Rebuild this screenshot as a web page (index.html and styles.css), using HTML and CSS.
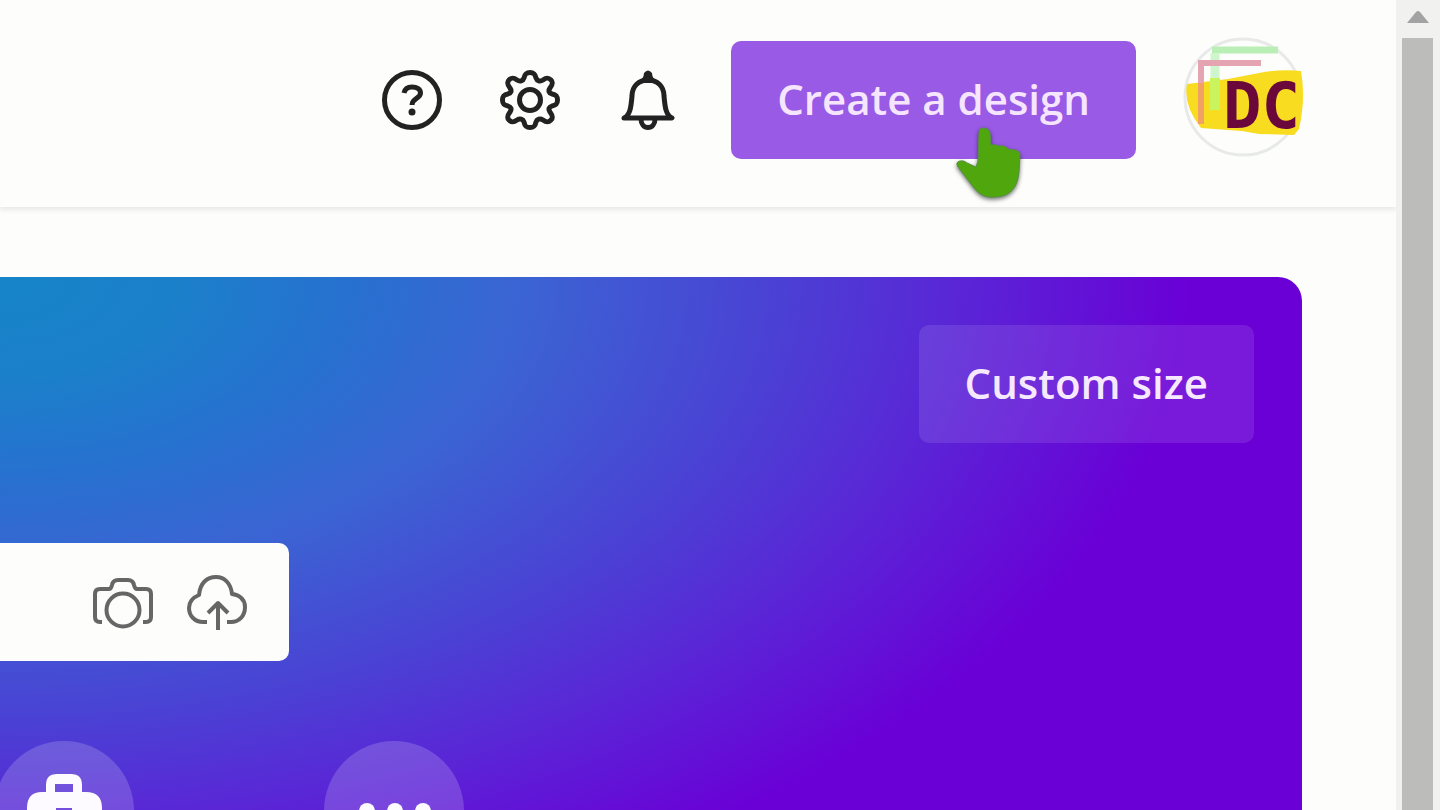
FILE: index.html
```html
<!DOCTYPE html>
<html lang="en">
<head>
<meta charset="utf-8">
<title>Home</title>
<link rel="stylesheet" href="styles.css">
</head>
<body>
<div class="page">
  <header class="header">
    <nav class="tools" aria-label="Account tools">
      <button class="icon-button" aria-label="Help">
        <svg class="icon" viewBox="0 0 60 60"><circle cx="30" cy="30" r="27.500"/><path d="M22 23c1-5 4-6 8-6 5 0 8.500 2 8.500 6 0 6-8.500 5-8.500 12"/><circle class="dot" cx="30" cy="42" r="3.500"/></svg>
      </button>
      <button class="icon-button" aria-label="Settings">
        <svg class="icon" viewBox="0 0 60 60"><circle cx="30" cy="30" r="10.500"/><path d="M24 8C25 3 27 2.500 30 2.500S35 3 36 8C37 11 40 12 43 10C47 7 49 8 51 10S53 14 50 18C48 21 49 23 52 24C57 25 57.500 27 57.500 30S57 35 52 36C49 37 48 39 50 42C53 46 53 48 51 50S47 53 43 50C40 48 37 49 36 52C35 57 33 57.500 30 57.500S25 57 24 52C23 49 20 48 17 50C13 53 11 52 9 50S7 46 10 42C12 39 11 37 8 36C3 35 2.500 33 2.500 30S3 25 8 24C11 23 12 21 10 18C7 14 7 12 9 10S13 7 17 10C20 12 23 11 24 8Z"/></svg>
      </button>
      <button class="icon-button" aria-label="Notifications">
        <svg class="icon" viewBox="0 0 60 60"><path d="M6 48C12 45 13 38 14 26C14 16 21 10 30 10S46 16 46 26C47 38 48 45 54 48Z"/><path class="dot" d="M20 13Q26 8 26 3 30-2 34 3 34 8 40 13Z"/><path d="M23 49c0 5 3 8.500 7 8.500s7-3.500 7-8.500"/></svg>
      </button>
    </nav>
    <div class="create">
      <button class="button button-create">Create a design</button>
      <svg class="pointer" viewBox="0 0 70 76"><path d="M25 5Q25 1 29 1Q35 1 36 6L37 18Q41 17 45 19Q51 18 54 22L61 23Q66 24 66 28L65 45Q63 69 42 70Q28 72 20 61L4 40Q1 35 6 34Q10 33 13 36L22 40L24 34Z"/></svg>
    </div>
    <button class="avatar-button" aria-label="Account DC">
      <svg class="avatar" viewBox="0 3 120 118">
        <circle class="avatar-ring" cx="59" cy="59" r="58"/>
        <path fill="#f8dc20" d="M3 46L44 41 75 35Q96 31 117 33Q122 60 115 91L110 97 75 96 58 93 17 90Q-1 67 3 46Z"/>
        <path fill="none" stroke="#c9f45d" stroke-width="10" d="M31 40V72"/>
        <path fill="none" stroke="#b9efb5" stroke-width="7" d="M28 12H94"/>
        <path fill="none" stroke="#cff5cc" stroke-width="9" d="M31 15V40"/>
        <path fill="none" stroke="#f2a064" stroke-width="6" d="M17 44V86"/>
        <path fill="none" stroke="#e5a4b1" stroke-width="6" d="M17 45V25H77"/>
        <text class="monogram" x="39" y="90">DC</text>
      </svg>
    </button>
  </header>
  <main class="content">
    <section class="hero">
      <button class="button button-size">Custom size</button>
      <div class="search">
        <button class="icon-button" aria-label="Search by photo">
          <svg class="icon icon-search" viewBox="0 0 60 60"><path d="M9 50H7Q2 50 2 45V22Q2 17 7 17H16Q18 17 19 13Q20 8 25 8H35Q40 8 41 13Q42 17 44 17H53Q58 17 58 22V45Q58 50 53 50H50"/><circle cx="30" cy="38" r="16.500"/></svg>
        </button>
        <button class="icon-button" aria-label="Upload">
          <svg class="icon icon-search" viewBox="0 0 60 60"><path d="M20 50H16C8 50 2 44 2 36C2 29 7 25 12 23C13 11 20 5 29 5C38 5 44 12 45 22C53 23 58 28 58 35C58 44 52 50 44 50H40M31 58V33M21 41L31 31L41 41"/></svg>
        </button>
      </div>
      <div class="shortcuts">
        <button class="shortcut" aria-label="Work">
          <svg class="glyph" viewBox="0 0 72 72"><path d="M18 17V10Q18-1 29-1H43Q54-1 54 10V17H58Q74 17 74 33V62H-1V33Q-1 17 14 17ZM27 17H45V9H27ZM28 33V42H44V33Z" fill-rule="evenodd"/></svg>
        </button>
        <button class="shortcut" aria-label="More">
          <svg class="glyph" viewBox="0 0 72 72"><circle cx="9" cy="36" r="8"/><circle cx="37" cy="36" r="8"/><circle cx="65" cy="36" r="8"/></svg>
        </button>
      </div>
    </section>
  </main>
</div>
<div class="scrollbar" aria-hidden="true">
  <svg class="arrow" viewBox="0 0 22 12"><path d="M0 12L9 1Q11-1 13 1L22 12Z"/></svg>
  <div class="thumb"></div>
</div>
</body>
</html>
```
FILE: styles.css
```css
* { box-sizing: border-box; }
body {
  margin: 0;
  height: 100vh;
  display: flex;
  overflow: hidden;
  background: #fdfdfc;
  font-family: "Open Sans", sans-serif;
}
button {
  flex: none;
  border: 0;
  padding: 0;
  background: none;
  font: inherit;
  color: inherit;
  cursor: pointer;
}
svg { display: block; overflow: visible; }
.page {
  flex: 1;
  min-width: 0;
  display: flex;
  flex-direction: column;
}
.header {
  display: flex;
  align-items: center;
  justify-content: flex-end;
  gap: 48px;
  padding: 41px 92px 48px 0;
  box-shadow: 0 2px 5px 1px #e9e9e8;
}
.tools { display: flex; gap: 58px; padding-right: 5px; }
.icon { width: 60px; height: 60px; fill: none; stroke: #222; stroke-width: 5; stroke-linejoin: round; }
.icon .dot { fill: #222; stroke: none; }
.icon-search { stroke: #666; stroke-width: 4; }
.create { position: relative; }
.button {
  height: 118px;
  padding: 0 46px 4px;
  border-radius: 10px;
  font-size: 42px;
  font-weight: 600;
  white-space: nowrap;
}
.button-create { background: #995ae6; color: #f6e5ff; }
.pointer {
  position: absolute;
  top: 86px;
  right: 112px;
  width: 70px;
  height: 76px;
  fill: #50a70d;
  stroke: #579044;
  stroke-width: 1;
  filter: drop-shadow(0 2px 2px #0008);
  pointer-events: none;
}
.avatar { width: 120px; height: 118px; }
.avatar-ring { fill: #fdfdfc; stroke: #e7eae8; stroke-width: 3; }
.monogram {
  font-family: "DejaVu Sans Mono", monospace;
  font-size: 64px;
  font-weight: 700;
  fill: #6b083b;
}
.content { flex: 1; min-height: 0; padding: 70px 94px 0 0; }
.hero {
  height: 100%;
  display: flex;
  flex-direction: column;
  align-items: flex-start;
  overflow: hidden;
  padding-top: 48px;
  border-top-right-radius: 24px;
  background: radial-gradient(1240px 710px at 0 0, #1684c8 0%, #1b80ca 14%, #2771d0 28%, #3b64d3 42%, #4a42d4 62%, #5928d6 76%, #6a00d6 96%);
}
.button-size {
  align-self: flex-end;
  margin-right: 48px;
  background: #ffffff1a;
  color: #f6e8ff;
}
.search {
  display: flex;
  align-items: center;
  justify-content: flex-end;
  gap: 34px;
  width: 289px;
  height: 118px;
  flex: none;
  margin-top: 100px;
  padding-right: 42px;
  border-radius: 0 10px 10px 0;
  background: #fdfdfc;
}
.shortcuts { display: flex; flex: none; gap: 190px; margin: 80px 0 0 -6px; }
.shortcut {
  display: grid;
  place-items: center;
  width: 140px;
  height: 140px;
  border-radius: 50%;
  background: #ffffff2c;
}
.glyph { width: 72px; height: 72px; fill: #fdfbff; }
.scrollbar {
  width: 44px;
  display: flex;
  flex-direction: column;
  align-items: center;
  padding: 11px 7px 0 6px;
  gap: 15px;
  background: #f1f1f0;
}
.arrow { width: 22px; height: 12px; fill: #a3a3a3; }
.thumb { flex: 1; width: 100%; background: #bcbcbb; }
```
